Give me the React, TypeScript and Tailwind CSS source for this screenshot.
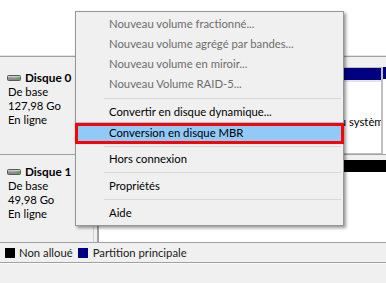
import React from "react";

const DiskIcon = () => (
  <svg width="14" height="6" viewBox="0 0 14 6" className="shrink-0">
    <rect x="0.5" y="0.5" width="13" height="5" rx="1" fill="#8c8c8c" stroke="#5a5a5a" />
    <rect x="1" y="1" width="12" height="1.5" fill="#c8c8c8" />
    <rect x="10" y="2.5" width="2" height="2" fill="#2fb52f" />
  </svg>
);

const MenuItem = ({
  label,
  disabled,
  h = "h-[20px]",
}: {
  label: string;
  disabled?: boolean;
  h?: string;
}) => (
  <div
    className={`${h} flex items-center pl-[33px] whitespace-nowrap ${
      disabled ? "text-[#6d6d6d]" : "text-black"
    }`}
  >
    {label}
  </div>
);

const Sep = ({ h = "h-[7px]" }: { h?: string }) => (
  <div className={`${h} flex items-center pl-[28px] pr-[2px]`}>
    <div className="h-px w-full bg-[#d7d7d7]" />
  </div>
);

export default function App() {
  return (
    <div className="relative w-[386px] h-[283px] overflow-hidden bg-white text-[11.3px] leading-[14px] text-black font-['Lato',sans-serif]">
      {/* top pane */}
      <div className="h-[55px] bg-white" />
      <div className="h-px bg-[#e3e3e3]" />
      <div className="h-px bg-[#a0a0a0]" />

      {/* Disk 0 row */}
      <div className="flex h-[97px] bg-[#f0f0f0]">
        <div className="w-[94px] shrink-0 overflow-hidden whitespace-nowrap pl-[8px] pt-[14px] border-r border-[#d0d0d0]">
          <div className="flex items-center gap-[4px] -ml-[1px]">
            <DiskIcon />
            <span className="font-bold text-[11.8px]">Disque 0</span>
          </div>
          <div>De base</div>
          <div>127,98 Go</div>
          <div>En ligne</div>
        </div>
        <div className="flex min-w-0 flex-1 pl-[3px] pt-[10px]">
          <div className="flex min-w-0 flex-1 flex-col border border-[#c0c0c0] bg-white overflow-hidden">
            <div className="h-[12px] bg-[#000080]" />
            <div className="flex-1 border-t-2 border-[#e6e6e6] pl-[163px] pt-[5px] whitespace-nowrap overflow-hidden">
              <div>(C:)</div>
              <div>126,9 Go NTFS</div>
              <div>Sain (Partition du système, Partition principale)</div>
            </div>
          </div>
          <div className="w-[4px] shrink-0 flex flex-col border-l border-[#c0c0c0] bg-white">
            <div className="h-[12px] bg-[#000080]" />
          </div>
        </div>
      </div>
      <div className="h-px bg-[#a0a0a0]" />
      <div className="h-px bg-[#f0f0f0]" />

      {/* Disk 1 row */}
      <div className="flex h-[86px] bg-[#f0f0f0]">
        <div className="w-[94px] shrink-0 overflow-hidden whitespace-nowrap pl-[8px] pt-[9px] border-r border-[#d0d0d0]">
          <div className="flex items-center gap-[4px] -ml-[1px]">
            <DiskIcon />
            <span className="font-bold text-[11.8px]">Disque 1</span>
          </div>
          <div>De base</div>
          <div>49,98 Go</div>
          <div>En ligne</div>
        </div>
        <div className="flex min-w-0 flex-1 pl-[3px] pt-[4px]">
          <div className="flex flex-1 flex-col border-l-2 border-[#a0a0a0] bg-white">
            <div className="h-[12px] bg-black" />
            <div className="flex-1 bg-white" />
          </div>
        </div>
      </div>
      <div className="h-px bg-[#a0a0a0]" />

      {/* legend */}
      <div className="flex h-[19px] items-center bg-[#f0f0f0] pl-[5px] text-[#1a1a1a] whitespace-nowrap">
        <div className="h-[10px] w-[10px] bg-black" />
        <span className="ml-[4px]">Non alloué</span>
        <div className="ml-[5px] h-[10px] w-[10px] bg-[#000080]" />
        <span className="ml-[5px]">Partition principale</span>
      </div>
      <div className="h-px bg-[#a0a0a0]" />
      <div className="h-px bg-[#fafafa]" />
      <div className="h-[30px] bg-[#f0f0f0]" />

      {/* Context menu */}
      <div className="absolute left-[75px] top-[11px] w-[269px] border border-[#979797] bg-[#f0f0f0] pt-[2px] pb-[2px] shadow-[2px_2px_3px_rgba(0,0,0,0.4)]">
        <MenuItem label="Nouveau volume fractionné..." disabled />
        <MenuItem label="Nouveau volume agrégé par bandes..." disabled />
        <MenuItem label="Nouveau volume en miroir..." disabled />
        <MenuItem label="Nouveau Volume RAID-5..." disabled />
        <Sep h="h-[8px]" />
        <MenuItem label="Convertir en disque dynamique..." />
        <div className="h-[21px] flex items-center pl-[33px] whitespace-nowrap bg-[#91c9f7]">
          Conversion en disque MBR
        </div>
        <Sep h="h-[6px]" />
        <MenuItem label="Hors connexion" />
        <Sep />
        <MenuItem label="Propriétés" />
        <Sep />
        <MenuItem label="Aide" />
      </div>

      {/* red highlight annotation */}
      <div className="absolute left-[75px] top-[123px] w-[269px] h-[21px] border-[3px] border-[#ff0000]" />
    </div>
  );
}
